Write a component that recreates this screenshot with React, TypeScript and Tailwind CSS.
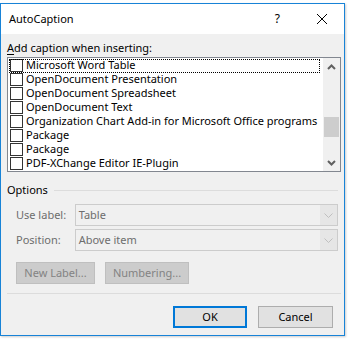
import React from "react";

const ITEMS = [
  "Microsoft Word Table",
  "OpenDocument Presentation",
  "OpenDocument Spreadsheet",
  "OpenDocument Text",
  "Organization Chart Add-in for Microsoft Office programs",
  "Package",
  "Package",
  "PDF-XChange Editor IE-Plugin",
];

const FONT = "font-['Segoe_UI','Noto_Sans','Open_Sans',sans-serif]";

function Chevron({ up }: { up?: boolean }) {
  return (
    <svg width="9" height="6" viewBox="0 0 9 6">
      <path
        d={up ? "M1 5 L4.5 1.5 L8 5" : "M1 1 L4.5 4.5 L8 1"}
        fill="none"
        stroke="currentColor"
        strokeWidth="2"
      />
    </svg>
  );
}

function DisabledSelect({ value }: { value: string }) {
  return (
    <div className="flex h-[22px] w-[265px] border border-[#cccccc] bg-[#f0f0f0]">
      <span className="flex-1 pl-[3px] leading-[20px] text-[#6d6d6d]">{value}</span>
      <span className="flex w-[17px] items-center justify-center bg-[#e6e6e6] text-[#bfbfbf]">
        <svg width="9" height="5" viewBox="0 0 9 5">
          <path d="M0.5 0.5 L4.5 4.5 L8.5 0.5" fill="none" stroke="currentColor" strokeWidth="1" />
        </svg>
      </span>
    </div>
  );
}

export default function App() {
  return (
    <div className={`h-[339px] w-[349px] bg-white pt-[3px] text-[11px] text-black ${FONT}`}>
      <div className="flex h-[333px] w-[345px] flex-col border border-[#1883d7] bg-[#f0f0f0] shadow-[1px_1px_2px_rgba(0,0,0,0.2)]">
        {/* title bar */}
        <div className="flex h-[30px] items-center bg-white">
          <span className="ml-[8px] flex-1 text-[11px]">AutoCaption</span>
          <span className="mr-[37px] text-[12px]">?</span>
          <svg width="10" height="10" viewBox="0 0 10 10" className="mr-[17px]">
            <path d="M0 0 L10 10 M10 0 L0 10" stroke="black" strokeWidth="1" />
          </svg>
        </div>

        <div className="flex flex-col px-[6px] pt-[6px]">
          <div className="leading-[16px]">
            <span className="underline underline-offset-2">A</span>dd caption when inserting:
          </div>

          {/* list box */}
          <div className="mt-[1px] flex h-[115px] w-[334px] border border-[#828790] bg-white">
            <div className="relative min-w-0 flex-1 overflow-hidden">
              {ITEMS.map((it, i) => (
                <div key={i} className="flex h-[14px] items-center">
                  <span className="ml-[2px] h-[13px] w-[13px] shrink-0 border border-[#333333] bg-white" />
                  <span className="ml-[3px] whitespace-nowrap leading-[14px]">{it}</span>
                </div>
              ))}
              <div className="absolute left-[1px] top-[1px] h-[14px] w-[311px] border border-dotted border-black" />
            </div>
            <div className="flex w-[17px] shrink-0 flex-col bg-[#f0f0f0]">
              <div className="flex h-[17px] items-center justify-center text-[#606060]">
                <Chevron up />
              </div>
              <div className="flex-1 pt-[42px]">
                <div className="mx-auto h-[20px] w-[15px] bg-[#cdcdcd]" />
              </div>
              <div className="flex h-[17px] items-center justify-center text-[#606060]">
                <Chevron />
              </div>
            </div>
          </div>

          {/* options */}
          <div className="mt-[10px] flex items-center leading-[16px]">
            <span>Options</span>
            <span className="ml-[6px] h-px flex-1 bg-[#dcdcdc]" />
          </div>

          <div className="mt-[6px] flex items-center pl-[9px]">
            <span className="w-[59px] text-[#6d6d6d]">Use label:</span>
            <DisabledSelect value="Table" />
          </div>
          <div className="mt-[3px] flex items-center pl-[9px]">
            <span className="w-[59px] text-[#6d6d6d]">Position:</span>
            <DisabledSelect value="Above item" />
          </div>

          <div className="mt-[11px] flex gap-[10px] pl-[9px]">
            <button className="h-[22px] w-[79px] border border-[#bfbfbf] bg-[#cccccc] text-[#838383]">
              New Label...
            </button>
            <button className="h-[22px] w-[84px] border border-[#bfbfbf] bg-[#cccccc] text-[#838383]">
              Numbering...
            </button>
          </div>

          <div className="mt-[9px] h-px w-[334px] bg-[#dcdcdc]" />

          <div className="mt-[12px] flex justify-end gap-[11px] pr-[5px]">
            <button className="h-[22px] w-[74px] border-2 border-[#0078d7] bg-[#e1e1e1]">OK</button>
            <button className="h-[22px] w-[75px] border border-[#adadad] bg-[#e1e1e1]">Cancel</button>
          </div>
        </div>
      </div>
    </div>
  );
}
